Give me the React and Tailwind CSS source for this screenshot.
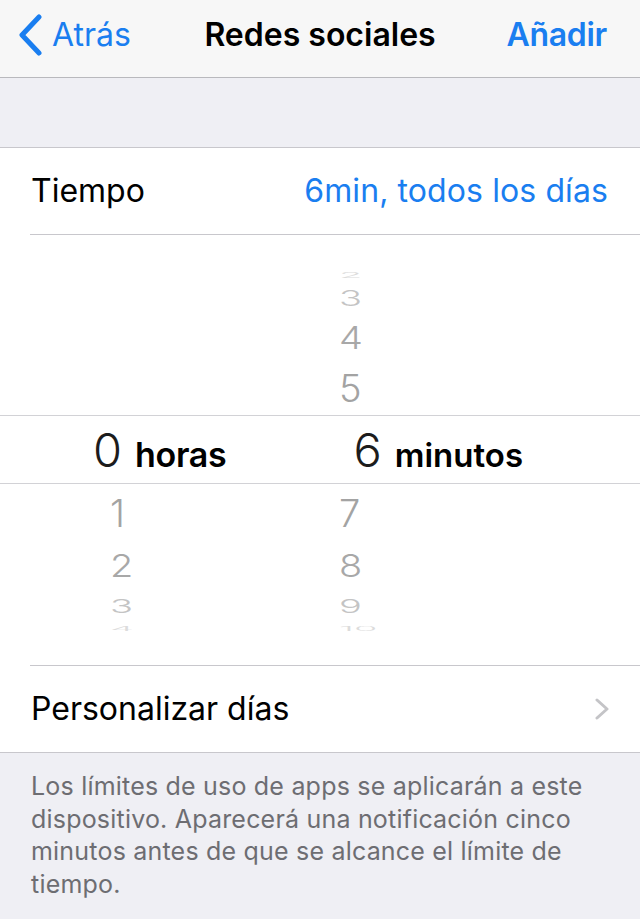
import React from "react"

const font = { fontFamily: "Inter, 'Noto Sans', sans-serif" }

// wheel rows: height, scale, colour class
const upper = [
  { v: "", h: 33, s: 1, c: "text-transparent" },
  { v: "2", h: 14, s: 0.2, c: "text-[#dcdcdc]" },
  { v: "3", h: 31, s: 0.55, c: "text-[#c4c4c4]" },
  { v: "4", h: 47, s: 0.83, c: "text-[#a8a8a8]" },
  { v: "5", h: 55, s: 1, c: "text-[#a3a3a3]" },
]

const lower = [
  { h: 57, s: 1, c: "text-[#a3a3a3]" },
  { h: 48, s: 0.83, c: "text-[#a8a8a8]" },
  { h: 33, s: 0.5, c: "text-[#c4c4c4]" },
  { h: 14, s: 0.15, c: "text-[#dcdcdc]" },
  { h: 29, s: 1, c: "text-transparent" },
]
const hoursLow = ["1", "2", "3", "4", ""]
const minsLow = ["7", "8", "9", "10", ""]

function WheelRow({ h, s, c, left, right }) {
  return (
    <div className="flex items-center overflow-hidden" style={{ height: h }}>
      <div className="w-[110px] shrink-0" />
      <div
        className={`w-[229px] shrink-0 text-[38px] font-light leading-none ${c}`}
        style={{ transform: `scaleY(${s})` }}
      >
        {left}
      </div>
      <div
        className={`text-[38px] font-light leading-none ${c}`}
        style={{ transform: `scaleY(${s})` }}
      >
        {right}
      </div>
    </div>
  )
}

const App = () => {
  return (
    <div className="w-[640px] h-[919px] bg-[#efeff4] overflow-hidden" style={font}>
      {/* nav bar */}
      <div className="relative h-[78px] bg-[#f7f7f7] border-b border-[#b9b9bd] flex items-center pb-[8px]">
        <div className="flex items-center pl-[17px] gap-[9px] text-[#1a7ef0]">
          <svg width="26" height="42" viewBox="0 0 26 42">
            <path d="M22 3 L5 21 L22 39" fill="none" stroke="#1a7ef0" strokeWidth="5" strokeLinecap="round" strokeLinejoin="round" />
          </svg>
          <span className="text-[32px]">Atrás</span>
        </div>
        <div className="absolute inset-x-0 top-0 bottom-[8px] flex items-center justify-center text-[32px] font-semibold text-black pointer-events-none">
          Redes sociales
        </div>
        <div className="ml-auto pr-[33px] text-[32px] font-semibold text-[#1a7ef0] tracking-[-0.3px]">Añadir</div>
      </div>

      {/* gray band */}
      <div className="h-[70px] border-b border-[#c8c7cc]" />

      {/* white section */}
      <div className="bg-white">
        <div className="h-[86px] flex items-center justify-between pl-[31px] pr-[32px]">
          <span className="text-[32px] text-black">Tiempo</span>
          <span className="text-[32px] text-[#1a7ef0] tracking-[0.1px]">6min, todos los días</span>
        </div>
        <div className="ml-[30px] h-px bg-[#c8c7cc]" />

        {/* picker */}
        <div className="h-[430px] flex flex-col">
          <div className="h-[180px] flex flex-col">
            {upper.map((r, i) => (
              <WheelRow key={i} h={r.h} s={r.s} c={r.c} left="" right={r.v} />
            ))}
          </div>
          <div className="h-px bg-[#d2d2d6]" />
          <div className="h-[67px] flex items-center">
            <div className="flex items-baseline">
              <div className="w-[93px] shrink-0" />
              <span className="text-[47px] font-light text-[#1c1c1c] leading-none">0</span>
              <span className="ml-[13px] text-[34px] font-semibold text-black tracking-[-0.3px] leading-none">horas</span>
              <div className="w-[127px] shrink-0" />
              <span className="text-[47px] font-light text-[#1c1c1c] leading-none">6</span>
              <span className="ml-[13px] text-[33px] font-semibold text-black leading-none">minutos</span>
            </div>
          </div>
          <div className="h-px bg-[#d2d2d6]" />
          <div className="h-[181px] flex flex-col">
            {lower.map((r, i) => (
              <WheelRow key={i} h={r.h} s={r.s} c={r.c} left={hoursLow[i]} right={minsLow[i]} />
            ))}
          </div>
        </div>

        <div className="ml-[30px] h-px bg-[#c8c7cc]" />
        <div className="h-[86px] flex items-center justify-between pl-[31px] pr-[30px]">
          <span className="text-[32px] text-black">Personalizar días</span>
          <svg width="16" height="22" viewBox="0 0 16 22">
            <path d="M3 2 L13 11 L3 20" fill="none" stroke="#c4c4c7" strokeWidth="3" strokeLinecap="round" strokeLinejoin="round" />
          </svg>
        </div>
      </div>
      <div className="h-px bg-[#c8c7cc]" />

      {/* footer */}
      <div className="pt-[17px] pl-[31px] text-[25px] leading-[32.5px] tracking-[0.2px] text-[#6d6d72]">
        <p>Los límites de uso de apps se aplicarán a este</p>
        <p>dispositivo. Aparecerá una notificación cinco</p>
        <p>minutos antes de que se alcance el límite de</p>
        <p>tiempo.</p>
      </div>
    </div>
  )
}

export default App
